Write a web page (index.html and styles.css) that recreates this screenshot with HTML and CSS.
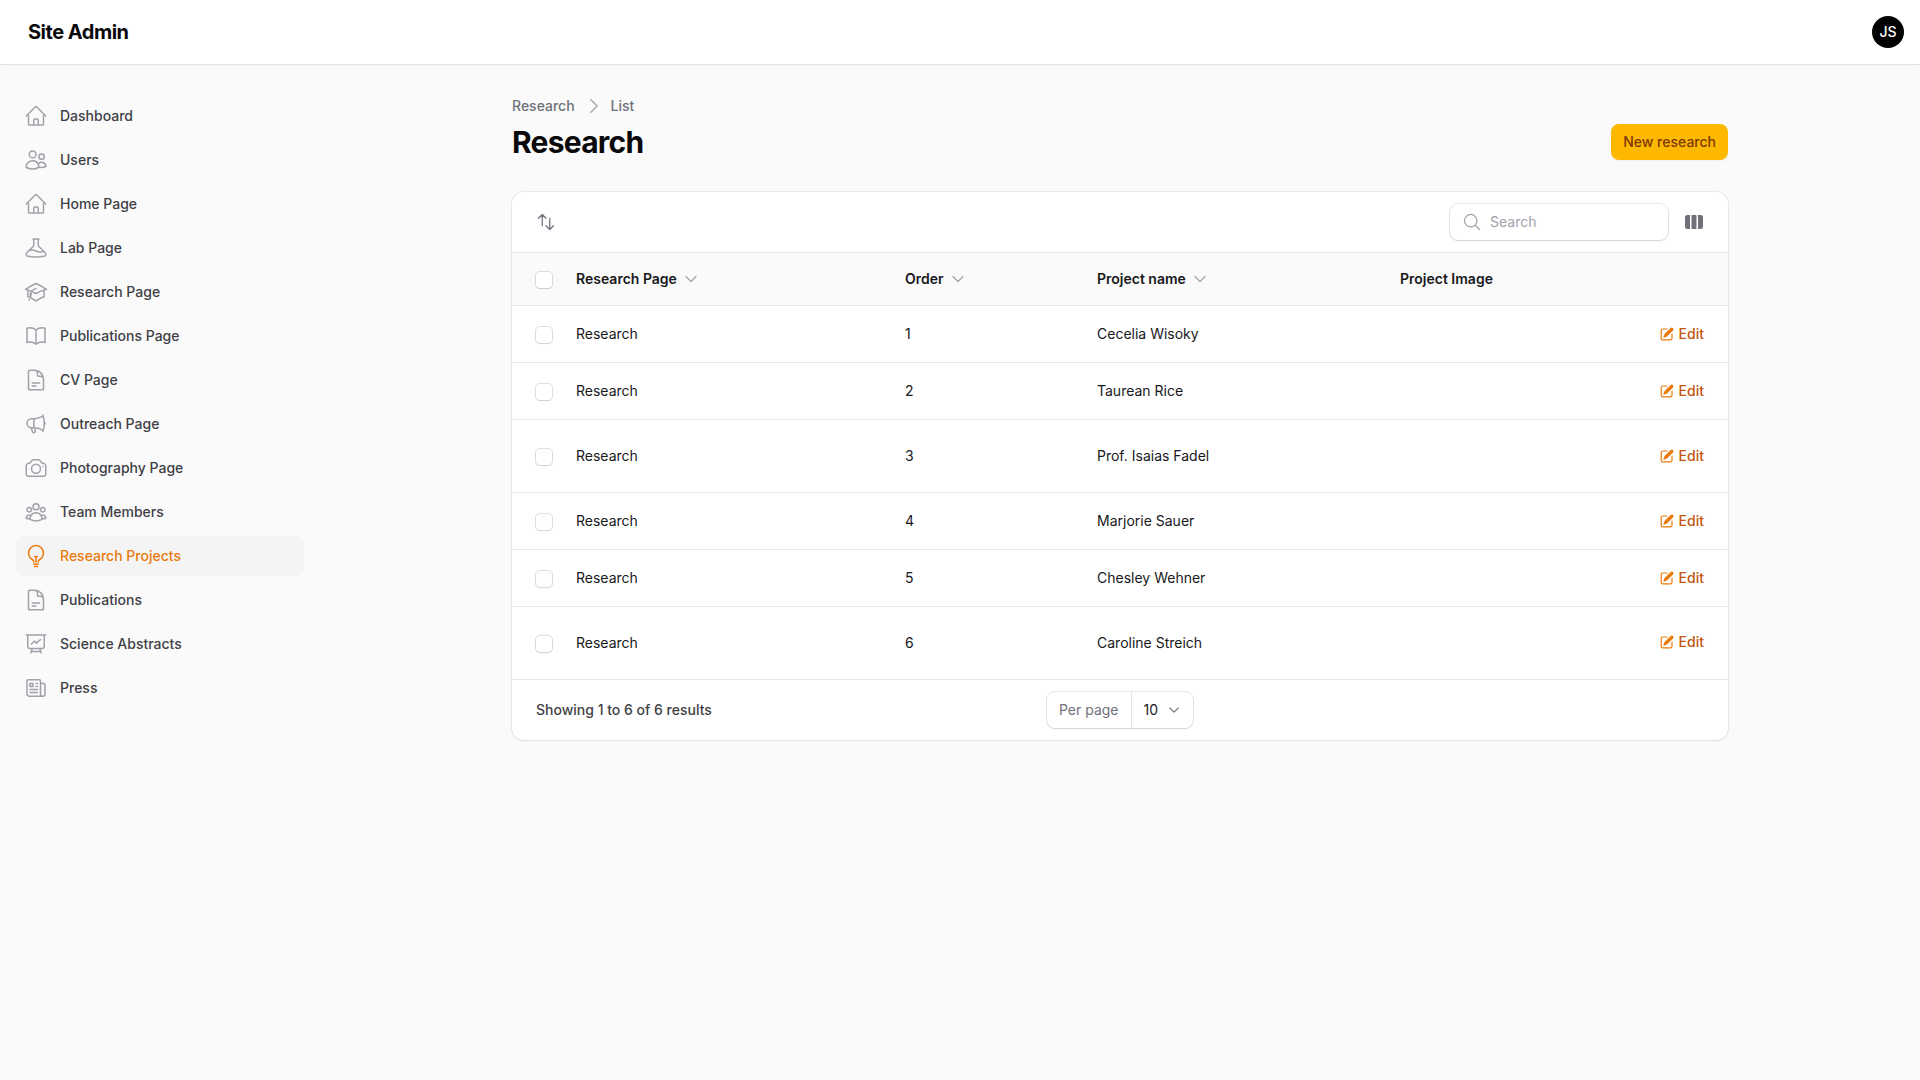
FILE: index.html
```html
<!DOCTYPE html>
<html lang="en">
<head>
    <meta charset="UTF-8">
    <meta name="viewport" content="width=device-width, initial-scale=1.0">
    <title>Research - Site Admin</title>
    <link rel="stylesheet" href="styles.css">
</head>
<body>

<svg class="icon-defs" aria-hidden="true">
    <symbol id="i-home" viewBox="0 0 24 24"><path d="m2.25 12 8.954-8.955c.44-.439 1.152-.439 1.591 0L21.75 12M4.5 9.75v10.125c0 .621.504 1.125 1.125 1.125H9.75v-4.875c0-.621.504-1.125 1.125-1.125h2.25c.621 0 1.125.504 1.125 1.125V21h4.125c.621 0 1.125-.504 1.125-1.125V9.75M8.25 21h8.25"/></symbol>
    <symbol id="i-users" viewBox="0 0 24 24"><path d="M15 19.128a9.38 9.38 0 0 0 2.625.372 9.337 9.337 0 0 0 4.121-.952 4.125 4.125 0 0 0-7.533-2.493M15 19.128v-.003c0-1.113-.285-2.16-.786-3.07M15 19.128v.106A12.318 12.318 0 0 1 8.624 21c-2.331 0-4.512-.645-6.374-1.766l-.001-.109a6.375 6.375 0 0 1 11.964-3.07M12 6.375a3.375 3.375 0 1 1-6.75 0 3.375 3.375 0 0 1 6.75 0Zm8.25 2.25a2.625 2.625 0 1 1-5.25 0 2.625 2.625 0 0 1 5.25 0Z"/></symbol>
    <symbol id="i-beaker" viewBox="0 0 24 24"><path d="M9.75 3.104v5.714a2.25 2.25 0 0 1-.659 1.591L5 14.5M9.75 3.104c-.251.023-.501.05-.75.082m.75-.082a24.301 24.301 0 0 1 4.5 0m0 0v5.714c0 .597.237 1.17.659 1.591L19.8 15.3M14.25 3.104c.251.023.501.05.75.082M19.8 15.3l-1.57.393A9.065 9.065 0 0 1 12 15a9.065 9.065 0 0 0-6.23-.693L5 14.5m14.8.8 1.402 1.402c1.232 1.232.65 3.318-1.067 3.611A48.309 48.309 0 0 1 12 21c-2.773 0-5.491-.235-8.135-.687-1.718-.293-2.3-2.379-1.067-3.61L5 14.5"/></symbol>
    <symbol id="i-cap" viewBox="0 0 24 24"><path d="M4.26 10.147a60.438 60.438 0 0 0-.491 6.347A48.62 48.62 0 0 1 12 20.904a48.62 48.62 0 0 1 8.232-4.41 60.46 60.46 0 0 0-.491-6.347m-15.482 0a50.636 50.636 0 0 0-2.658-.813A59.906 59.906 0 0 1 12 3.493a59.903 59.903 0 0 1 10.399 5.84c-.896.248-1.783.52-2.658.814m-15.482 0A50.717 50.717 0 0 1 12 13.489a50.702 50.702 0 0 1 7.74-3.342M6.75 15a.75.75 0 1 0 0-1.5.75.75 0 0 0 0 1.5Zm0 0v-3.675A55.378 55.378 0 0 1 12 8.443m-7.007 11.55A5.981 5.981 0 0 0 6.75 15.75v-1.5"/></symbol>
    <symbol id="i-book" viewBox="0 0 24 24"><path d="M12 6.042A8.967 8.967 0 0 0 6 3.75c-1.052 0-2.062.18-3 .512v14.25A8.987 8.987 0 0 1 6 18c2.305 0 4.408.867 6 2.292m0-14.25a8.966 8.966 0 0 1 6-2.292c1.052 0 2.062.18 3 .512v14.25A8.987 8.987 0 0 0 18 18a8.967 8.967 0 0 0-6 2.292m0-14.25v14.25"/></symbol>
    <symbol id="i-doc" viewBox="0 0 24 24"><path d="M19.5 14.25v-2.625a3.375 3.375 0 0 0-3.375-3.375h-1.5A1.125 1.125 0 0 1 13.5 7.125v-1.5a3.375 3.375 0 0 0-3.375-3.375H8.25m0 12.75h7.5m-7.5 3H12M10.5 2.25H5.625c-.621 0-1.125.504-1.125 1.125v17.25c0 .621.504 1.125 1.125 1.125h12.75c.621 0 1.125-.504 1.125-1.125V11.25a9 9 0 0 0-9-9Z"/></symbol>
    <symbol id="i-megaphone" viewBox="0 0 24 24"><path d="M10.34 15.84c-.688-.06-1.386-.09-2.09-.09H7.5a4.5 4.5 0 1 1 0-9h.75c.704 0 1.402-.03 2.09-.09m0 9.18c.253.962.584 1.892.985 2.783.247.55.06 1.21-.463 1.511l-.657.38c-.551.318-1.26.117-1.527-.461a20.845 20.845 0 0 1-1.44-4.282m3.102.069a18.03 18.03 0 0 1-.59-4.59c0-1.586.205-3.124.59-4.59m0 9.18a23.848 23.848 0 0 1 8.835 2.535M10.34 6.66a23.847 23.847 0 0 0 8.835-2.535m0 0A23.74 23.74 0 0 0 18.795 3m.38 1.125a23.91 23.91 0 0 1 1.014 5.395m-1.014 8.855c-.118.38-.245.754-.38 1.125m.38-1.125a23.91 23.91 0 0 0 1.014-5.395m0-3.46c.495.413.811 1.035.811 1.73 0 .695-.316 1.317-.811 1.73m0-3.46a24.347 24.347 0 0 1 0 3.46"/></symbol>
    <symbol id="i-camera" viewBox="0 0 24 24"><path d="M6.827 6.175A2.31 2.31 0 0 1 5.186 7.23c-.38.054-.757.112-1.134.175C2.999 7.58 2.25 8.507 2.25 9.574V18a2.25 2.25 0 0 0 2.25 2.25h15A2.25 2.25 0 0 0 21.75 18V9.574c0-1.067-.75-1.994-1.802-2.169a47.865 47.865 0 0 0-1.134-.175 2.31 2.31 0 0 1-1.64-1.055l-.822-1.316a2.192 2.192 0 0 0-1.736-1.039 48.774 48.774 0 0 0-5.232 0 2.192 2.192 0 0 0-1.736 1.039l-.821 1.316Z"/><path d="M16.5 12.75a4.5 4.5 0 1 1-9 0 4.5 4.5 0 0 1 9 0ZM18.75 10.5h.008v.008h-.008V10.5Z"/></symbol>
    <symbol id="i-group" viewBox="0 0 24 24"><path d="M18 18.72a9.094 9.094 0 0 0 3.741-.479 3 3 0 0 0-4.682-2.72m.94 3.198.001.031c0 .225-.012.447-.037.666A11.944 11.944 0 0 1 12 21c-2.17 0-4.207-.576-5.963-1.584A6.062 6.062 0 0 1 6 18.719m12 0a5.971 5.971 0 0 0-.941-3.197m0 0A5.995 5.995 0 0 0 12 12.75a5.995 5.995 0 0 0-5.058 2.772m0 0a3 3 0 0 0-4.681 2.72 8.986 8.986 0 0 0 3.74.477m.94-3.197a5.971 5.971 0 0 0-.94 3.197M15 6.75a3 3 0 1 1-6 0 3 3 0 0 1 6 0Zm6 3a2.25 2.25 0 1 1-4.5 0 2.25 2.25 0 0 1 4.5 0Zm-13.5 0a2.25 2.25 0 1 1-4.5 0 2.25 2.25 0 0 1 4.5 0Z"/></symbol>
    <symbol id="i-bulb" viewBox="0 0 24 24"><path d="M12 18v-5.25m0 0a6.01 6.01 0 0 0 1.5-.189m-1.5.189a6.01 6.01 0 0 1-1.5-.189m3.75 7.478a12.06 12.06 0 0 1-4.5 0m3.75 2.383a14.406 14.406 0 0 1-3 0M14.25 18v-.192c0-.983.658-1.823 1.508-2.316a7.5 7.5 0 1 0-7.517 0c.85.493 1.509 1.333 1.509 2.316V18"/></symbol>
    <symbol id="i-chart" viewBox="0 0 24 24"><path d="M3.75 3v11.25A2.25 2.25 0 0 0 6 16.5h2.25M3.75 3h-1.5m1.5 0h16.5m0 0h1.5m-1.5 0v11.25A2.25 2.25 0 0 1 18 16.5h-2.25m-7.5 0h7.5m-7.5 0-1 3m8.5-3 1 3m0 0 .5 1.5m-.5-1.5h-9.5m0 0-.5 1.5m.75-9 3-3 2.148 2.148A12.061 12.061 0 0 1 16.5 7.605"/></symbol>
    <symbol id="i-news" viewBox="0 0 24 24"><path d="M12 7.5h1.5m-1.5 3h1.5m-7.5 3h7.5m-7.5 3h7.5m3-9h3.375c.621 0 1.125.504 1.125 1.125V18a2.25 2.25 0 0 1-2.25 2.25M16.5 7.5V18a2.25 2.25 0 0 0 2.25 2.25M16.5 7.5V4.875c0-.621-.504-1.125-1.125-1.125H4.125C3.504 3.75 3 4.254 3 4.875V18a2.25 2.25 0 0 0 2.25 2.25h13.5M6 7.5h3v3H6v-3Z"/></symbol>
    <symbol id="i-chevron" viewBox="0 0 24 24"><path d="m19.5 8.25-7.5 7.5-7.5-7.5"/></symbol>
    <symbol id="i-edit" viewBox="0 0 20 20"><path d="m5.433 13.917 1.262-3.155A4 4 0 0 1 7.58 9.42l6.92-6.918a2.121 2.121 0 0 1 3 3l-6.92 6.918c-.383.383-.84.685-1.343.886l-3.154 1.262a.5.5 0 0 1-.65-.65Z"/><path d="M3.5 5.75c0-.69.56-1.25 1.25-1.25H10A.75.75 0 0 0 10 3H4.75A2.75 2.75 0 0 0 2 5.75v9.5A2.75 2.75 0 0 0 4.75 18h9.5A2.75 2.75 0 0 0 17 15.25V10a.75.75 0 0 0-1.5 0v5.25c0 .69-.56 1.25-1.25 1.25h-9.5c-.69 0-1.25-.56-1.25-1.25v-9.5Z"/></symbol>
</svg>

<header class="topbar">
    <span class="brand">Site Admin</span>
    <span class="avatar">JS</span>
</header>

<div class="layout">
    <nav class="sidebar">
        <a class="nav-item" href="#"><svg class="nav-icon"><use href="#i-home"/></svg>Dashboard</a>
        <a class="nav-item" href="#"><svg class="nav-icon"><use href="#i-users"/></svg>Users</a>
        <a class="nav-item" href="#"><svg class="nav-icon"><use href="#i-home"/></svg>Home Page</a>
        <a class="nav-item" href="#"><svg class="nav-icon"><use href="#i-beaker"/></svg>Lab Page</a>
        <a class="nav-item" href="#"><svg class="nav-icon"><use href="#i-cap"/></svg>Research Page</a>
        <a class="nav-item" href="#"><svg class="nav-icon"><use href="#i-book"/></svg>Publications Page</a>
        <a class="nav-item" href="#"><svg class="nav-icon"><use href="#i-doc"/></svg>CV Page</a>
        <a class="nav-item" href="#"><svg class="nav-icon"><use href="#i-megaphone"/></svg>Outreach Page</a>
        <a class="nav-item" href="#"><svg class="nav-icon"><use href="#i-camera"/></svg>Photography Page</a>
        <a class="nav-item" href="#"><svg class="nav-icon"><use href="#i-group"/></svg>Team Members</a>
        <a class="nav-item active" href="#"><svg class="nav-icon"><use href="#i-bulb"/></svg>Research Projects</a>
        <a class="nav-item" href="#"><svg class="nav-icon"><use href="#i-doc"/></svg>Publications</a>
        <a class="nav-item" href="#"><svg class="nav-icon"><use href="#i-chart"/></svg>Science Abstracts</a>
        <a class="nav-item" href="#"><svg class="nav-icon"><use href="#i-news"/></svg>Press</a>
    </nav>

    <main class="content">
        <div class="page-head">
            <div>
                <div class="breadcrumbs">
                    <span>Research</span>
                    <svg class="crumb-sep" viewBox="0 0 24 24"><path d="m8.25 4.5 7.5 7.5-7.5 7.5"/></svg>
                    <span>List</span>
                </div>
                <h1>Research</h1>
            </div>
            <button type="button" class="btn-new">New research</button>
        </div>

        <section class="card">
            <div class="toolbar">
                <svg class="sort-icon" viewBox="0 0 24 24"><path d="M3 7.5 7.5 3m0 0L12 7.5M7.5 3v13.5m13.5 0L16.5 21m0 0L12 16.5m4.5 4.5V7.5"/></svg>
                <div class="toolbar-right">
                    <label class="search">
                        <svg class="search-icon" viewBox="0 0 24 24"><path d="m21 21-5.197-5.197m0 0A7.5 7.5 0 1 0 5.196 5.196a7.5 7.5 0 0 0 10.607 10.607Z"/></svg>
                        <input type="text" placeholder="Search">
                    </label>
                    <svg class="columns-icon" viewBox="0 0 20 20"><path d="M14 17h2.75A2.25 2.25 0 0 0 19 14.75v-9.5A2.25 2.25 0 0 0 16.75 3H14v14ZM12.5 3h-5v14h5V3ZM3.25 3H6v14H3.25A2.25 2.25 0 0 1 1 14.75v-9.5A2.25 2.25 0 0 1 3.25 3Z"/></svg>
                </div>
            </div>

            <table class="data-table">
                <colgroup>
                    <col class="col-check">
                    <col class="col-page">
                    <col class="col-order">
                    <col class="col-name">
                    <col>
                </colgroup>
                <thead>
                    <tr>
                        <th><span class="checkbox"></span></th>
                        <th><span class="th-label">Research Page <svg class="th-chevron"><use href="#i-chevron"/></svg></span></th>
                        <th><span class="th-label">Order <svg class="th-chevron"><use href="#i-chevron"/></svg></span></th>
                        <th><span class="th-label">Project name <svg class="th-chevron"><use href="#i-chevron"/></svg></span></th>
                        <th>Project Image</th>
                    </tr>
                </thead>
                <tbody>
                    <tr>
                        <td><span class="checkbox"></span></td>
                        <td>Research</td>
                        <td>1</td>
                        <td>Cecelia Wisoky</td>
                        <td class="cell-action"><a class="edit-link" href="#"><svg class="edit-icon"><use href="#i-edit"/></svg>Edit</a></td>
                    </tr>
                    <tr>
                        <td><span class="checkbox"></span></td>
                        <td>Research</td>
                        <td>2</td>
                        <td>Taurean Rice</td>
                        <td class="cell-action"><a class="edit-link" href="#"><svg class="edit-icon"><use href="#i-edit"/></svg>Edit</a></td>
                    </tr>
                    <tr class="row-tall">
                        <td><span class="checkbox"></span></td>
                        <td>Research</td>
                        <td>3</td>
                        <td>Prof. Isaias Fadel</td>
                        <td class="cell-action"><a class="edit-link" href="#"><svg class="edit-icon"><use href="#i-edit"/></svg>Edit</a></td>
                    </tr>
                    <tr>
                        <td><span class="checkbox"></span></td>
                        <td>Research</td>
                        <td>4</td>
                        <td>Marjorie Sauer</td>
                        <td class="cell-action"><a class="edit-link" href="#"><svg class="edit-icon"><use href="#i-edit"/></svg>Edit</a></td>
                    </tr>
                    <tr>
                        <td><span class="checkbox"></span></td>
                        <td>Research</td>
                        <td>5</td>
                        <td>Chesley Wehner</td>
                        <td class="cell-action"><a class="edit-link" href="#"><svg class="edit-icon"><use href="#i-edit"/></svg>Edit</a></td>
                    </tr>
                    <tr class="row-tall">
                        <td><span class="checkbox"></span></td>
                        <td>Research</td>
                        <td>6</td>
                        <td>Caroline Streich</td>
                        <td class="cell-action"><a class="edit-link" href="#"><svg class="edit-icon"><use href="#i-edit"/></svg>Edit</a></td>
                    </tr>
                </tbody>
            </table>

            <div class="card-footer">
                <span class="results">Showing 1 to 6 of 6 results</span>
                <div class="per-page">
                    <span class="per-page-label">Per page</span>
                    <span class="per-page-value">10 <svg class="per-page-chevron"><use href="#i-chevron"/></svg></span>
                </div>
            </div>
        </section>
    </main>
</div>

</body>
</html>
```

FILE: styles.css
```css
* {
    box-sizing: border-box;
}

body {
    margin: 0;
    min-height: 100vh;
    background-color: #fafafa;
    color: #18181b;
    font-family: Inter, "Liberation Sans", sans-serif;
    font-size: 14px;
    line-height: 20px;
}

a {
    color: inherit;
    text-decoration: none;
}

svg {
    flex-shrink: 0;
    fill: none;
    stroke: currentColor;
    stroke-width: 1.5;
    stroke-linecap: round;
    stroke-linejoin: round;
}

.icon-defs {
    display: none;
}

/* top bar */
.topbar {
    display: flex;
    align-items: center;
    justify-content: space-between;
    height: 64px;
    padding: 0 16px 0 28px;
    background-color: #fff;
    box-shadow: 0 1px 0 #e4e4e7, 0 1px 2px rgba(0, 0, 0, 0.05);
    position: relative;
}

.brand {
    font-size: 20px;
    font-weight: 700;
    line-height: 20px;
    letter-spacing: -0.5px;
    color: #09090b;
}

.avatar {
    display: flex;
    align-items: center;
    justify-content: center;
    width: 32px;
    height: 32px;
    border-radius: 50%;
    background-color: #000;
    color: #fff;
    font-size: 14px;
    font-weight: 500;
}

.layout {
    display: flex;
}

/* sidebar */
.sidebar {
    display: flex;
    flex-direction: column;
    gap: 4px;
    width: 320px;
    flex-shrink: 0;
    padding: 32px 16px;
}

.nav-item {
    display: flex;
    align-items: center;
    gap: 12px;
    height: 40px;
    padding: 0 8px;
    border-radius: 8px;
    color: #3f3f46;
    font-weight: 500;
}

.nav-icon {
    width: 24px;
    height: 24px;
    color: #a1a1aa;
}

.nav-item.active {
    background-color: #f4f4f5;
    color: #ea7a0c;
}

.nav-item.active .nav-icon {
    color: #ea7a0c;
}

/* main column */
.content {
    flex: 1;
    max-width: 1280px;
    margin: 0 auto;
    padding: 32px;
}

.page-head {
    display: flex;
    align-items: flex-end;
    justify-content: space-between;
    margin-bottom: 32px;
}

.breadcrumbs {
    display: flex;
    align-items: center;
    gap: 8px;
    margin-bottom: 8px;
    color: #71717a;
    font-weight: 500;
}

.crumb-sep {
    width: 20px;
    height: 20px;
    margin: 0 -1px 0 1px;
    color: #a1a1aa;
}

h1 {
    margin: 0;
    font-size: 30px;
    font-weight: 700;
    line-height: 36px;
    letter-spacing: -0.75px;
    color: #09090b;
}

.btn-new {
    height: 36px;
    padding: 0 12px;
    border: none;
    border-radius: 8px;
    background-color: #ffb800;
    color: #7c3a06;
    font: inherit;
    font-weight: 500;
    box-shadow: 0 1px 2px rgba(0, 0, 0, 0.05);
}

/* table card */
.card {
    background-color: #fff;
    border-radius: 12px;
    box-shadow: 0 0 0 1px rgba(9, 9, 11, 0.07), 0 1px 2px rgba(0, 0, 0, 0.05);
    overflow: hidden;
}

.toolbar {
    display: flex;
    align-items: center;
    justify-content: space-between;
    height: 60px;
    padding: 0 24px;
}

.sort-icon {
    width: 20px;
    height: 20px;
    color: #71717a;
}

.toolbar-right {
    display: flex;
    align-items: center;
    gap: 16px;
}

.search {
    display: flex;
    align-items: center;
    gap: 8px;
    width: 218px;
    height: 36px;
    padding: 0 12px;
    border-radius: 8px;
    box-shadow: 0 0 0 1px rgba(9, 9, 11, 0.1), 0 1px 2px rgba(0, 0, 0, 0.08);
}

.search-icon {
    width: 20px;
    height: 20px;
    color: #a1a1aa;
}

.search input {
    flex: 1;
    min-width: 0;
    border: none;
    outline: none;
    padding: 0;
    background: none;
    font: inherit;
    color: #09090b;
}

.search input::placeholder {
    color: #a1a1aa;
}

.columns-icon {
    width: 20px;
    height: 20px;
    fill: #71717a;
    stroke: none;
}

.data-table {
    width: 100%;
    table-layout: fixed;
    border-collapse: collapse;
}

.col-check {
    width: 64px;
}

.col-page {
    width: 329px;
}

.col-order {
    width: 192px;
}

.col-name {
    width: 303px;
}

.data-table th,
.data-table td {
    padding: 0;
    vertical-align: middle;
    text-align: left;
    border-top: 1px solid #e8e8ea;
}

.data-table th {
    height: 53px;
    background-color: #fafafa;
    font-weight: 600;
    color: #18181b;
}

.data-table th:first-child,
.data-table td:first-child {
    padding-left: 24px;
}

.data-table td {
    height: 57px;
}

.data-table .row-tall td {
    height: 73px;
}

.data-table tbody tr:last-child td {
    height: 72px;
}

.th-label {
    display: inline-flex;
    align-items: center;
    gap: 4px;
}

.th-chevron {
    width: 16px;
    height: 16px;
    margin-left: 2px;
    color: #a1a1aa;
    stroke-width: 1.8;
}

.checkbox {
    display: block;
    width: 16px;
    height: 16px;
    margin-top: 2px;
    border-radius: 4px;
    background-color: #fff;
    box-shadow: 0 0 0 1px rgba(9, 9, 11, 0.12), 0 1px 2px rgba(0, 0, 0, 0.08);
}

.cell-action {
    padding-right: 24px !important;
    text-align: right !important;
}

.edit-link {
    display: inline-flex;
    align-items: center;
    gap: 4px;
    margin-top: 2px;
    color: #c2560c;
    font-weight: 500;
}

.edit-icon {
    width: 16px;
    height: 16px;
    fill: #ea7a0c;
    stroke: none;
}

/* pagination */
.card-footer {
    display: grid;
    grid-template-columns: 1fr auto 1fr;
    align-items: center;
    height: 61px;
    padding: 0 24px;
    border-top: 1px solid #e8e8ea;
}

.results {
    color: #3f3f46;
    font-weight: 500;
}

.per-page {
    display: flex;
    height: 36px;
    border-radius: 8px;
    box-shadow: 0 0 0 1px rgba(9, 9, 11, 0.1), 0 1px 2px rgba(0, 0, 0, 0.08);
}

.per-page-label {
    display: flex;
    align-items: center;
    padding: 0 12px;
    color: #71717a;
    border-right: 1px solid #e4e4e7;
}

.per-page-value {
    display: flex;
    align-items: center;
    gap: 9px;
    padding: 0 12px;
    color: #18181b;
}

.per-page-chevron {
    width: 14px;
    height: 14px;
    color: #71717a;
    stroke-width: 2;
}
```
